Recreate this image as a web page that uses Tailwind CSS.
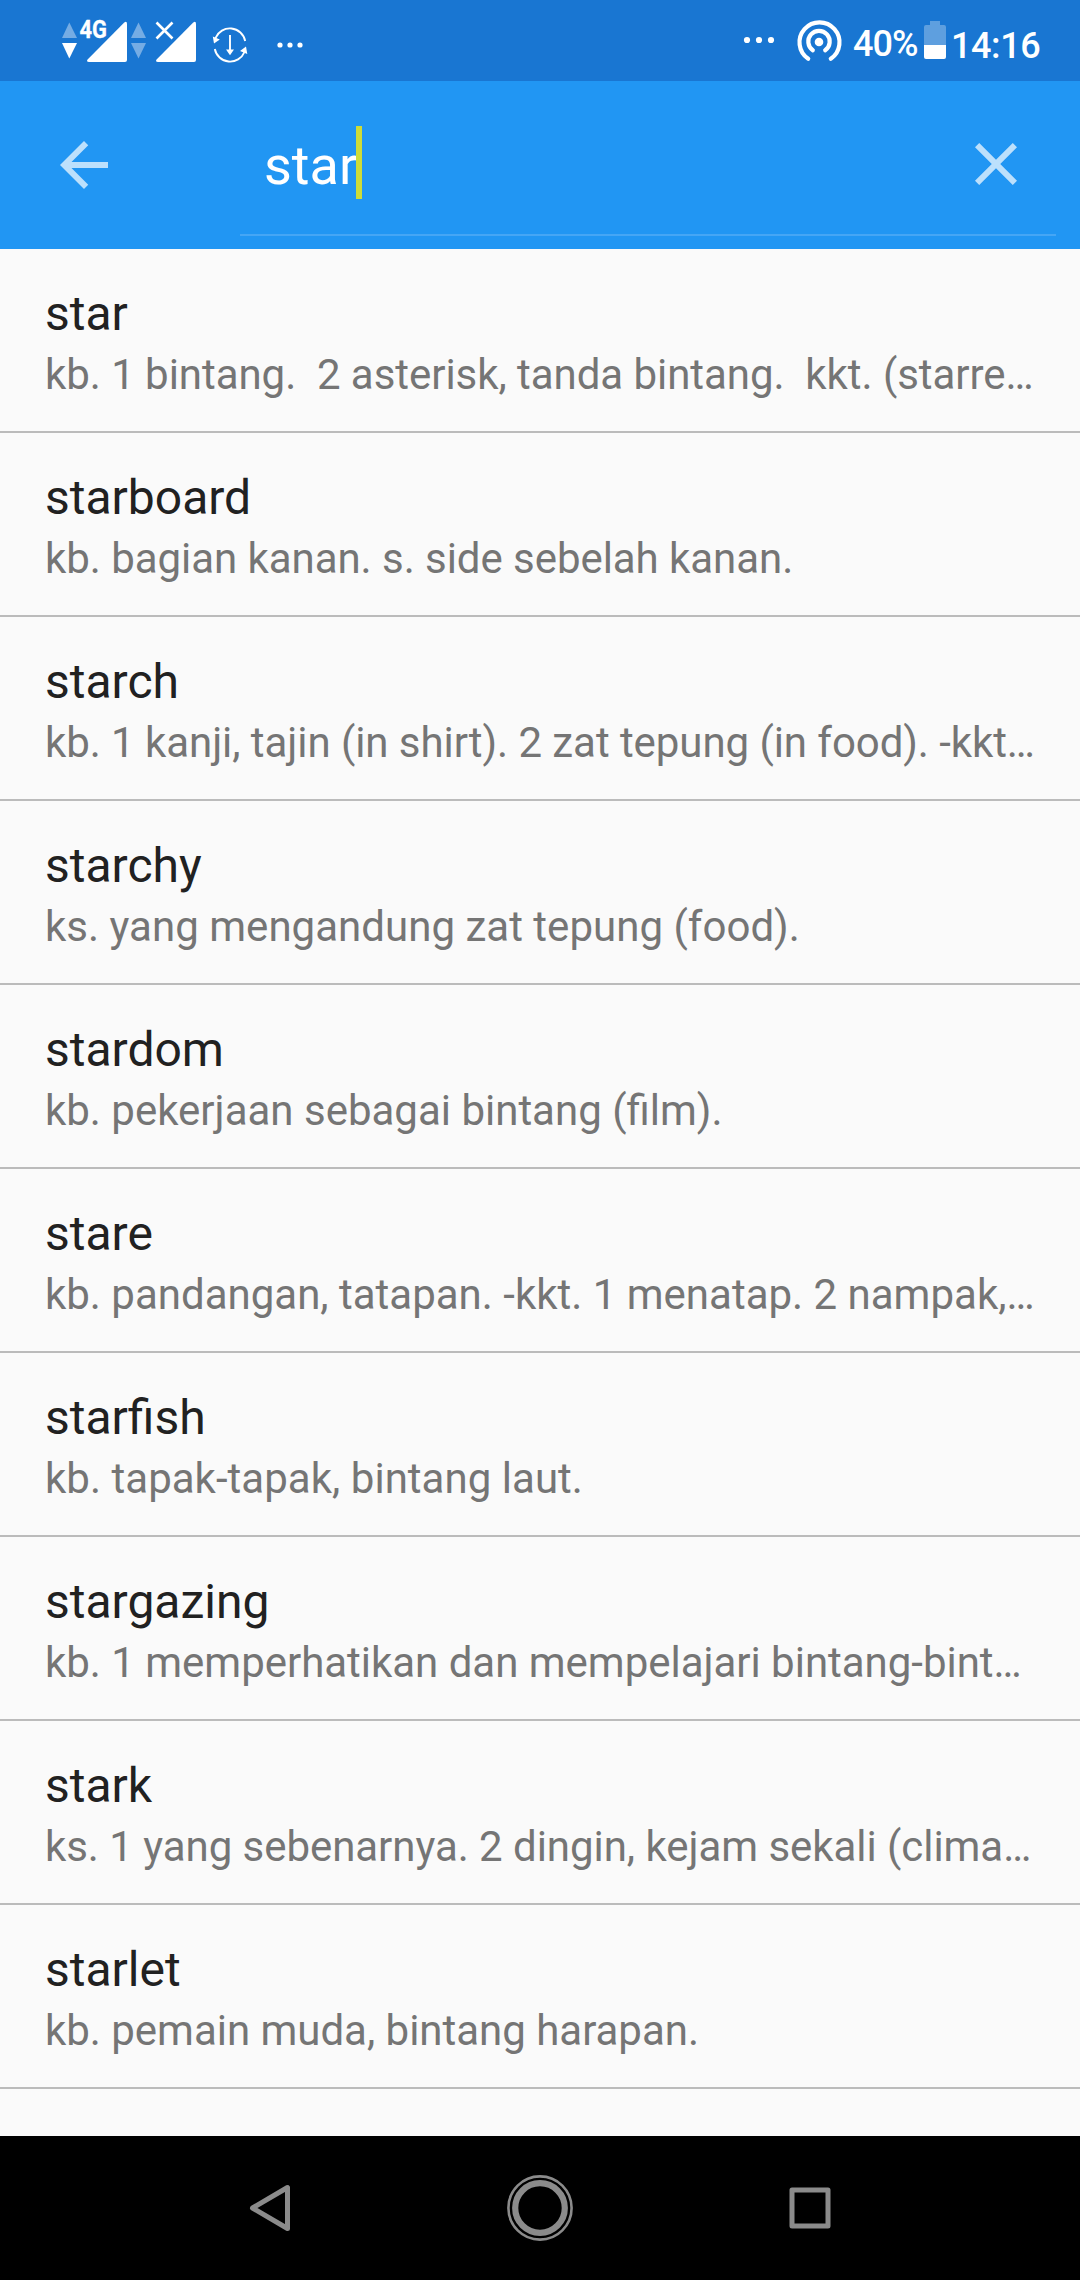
<!DOCTYPE html>
<html lang="id">
<head>
<meta charset="utf-8">
<title>Kamus</title>
<script src="https://cdn.jsdelivr.net/npm/@tailwindcss/browser@4"></script>
</head>
<body class="w-[1080px] h-[2280px] flex flex-col overflow-hidden bg-[#fafafa] font-['Roboto',sans-serif]">

<!-- Status bar -->
<header class="h-[81px] shrink-0 flex justify-between bg-[#1976d2] text-white">
  <svg class="w-[320px] h-[81px]" viewBox="0 0 320 81" fill="#fff">
    <g fill-opacity=".4"><path d="M69.3 22.5 77 38H62z"/><path d="M138.5 22.5 146 38h-15z"/><path d="M138.5 58.5 146 43h-15z"/></g>
    <path d="M69.3 58.5 77 43H62z"/>
    <text x="79.500" y="38.400" font-family="Roboto" font-weight="700" font-size="26.500" textLength="27.500" lengthAdjust="spacingAndGlyphs" stroke="#fff" stroke-width=".3">4G</text>
    <path d="M87.600 59.400 124 22.700Q127 20.500 127 24V60Q127 62 125 62H89Q86 61.500 87.600 59.400z"/>
    <path d="M156.600 59.400 193 22.700Q196 20.500 196 24V60Q196 62 194 62H158Q155 61.500 156.600 59.400z"/>
    <path d="M156.500 22.500 172.500 38.500M172.500 22.500 156.500 38.500" stroke="#fff" stroke-width="2.600"/>
    <path d="M215.500 38A15.600 15.600 0 0 1 245.200 41M214.800 49A15.600 15.600 0 0 0 244.500 52M230 35V51" stroke="#fff" stroke-width="1.900" fill="none"/>
    <path d="M212.800 36.500 219.800 39.600 214 43.500zM247.300 54 240 51 246 46.500zM226 49.500H234L230 55.300z"/>
    <circle cx="280" cy="45" r="2.600"/><circle cx="290" cy="45" r="2.600"/><circle cx="300" cy="45" r="2.600"/>
  </svg>
  <div class="flex">
    <svg class="w-[113px] h-[81px]" viewBox="740 0 113 81" fill="#fff">
      <circle cx="747" cy="40" r="3.100"/><circle cx="759" cy="40" r="3.100"/><circle cx="771" cy="40" r="3.100"/>
      <circle cx="819" cy="42" r="4.300"/>
      <g fill="none" stroke="#fff" stroke-width="4.200" stroke-linecap="round"><path d="M808.200 58.800A20 20 0 1 1 830.800 58.800"/><path d="M812.800 50.300A10.700 10.700 0 1 1 825.200 50.300"/></g>
    </svg>
    <span class="w-[69px] pt-[23px] text-[36px] leading-[42px] font-medium tracking-[-0.9px] whitespace-nowrap">40%</span>
    <svg class="w-[29px] h-[81px]" viewBox="922 0 29 81" fill="#fff">
      <path d="M930 21H940V25H944Q946 25 946 27V45H924V27Q924 25 926 25H930z" fill-opacity=".3"/><path d="M924 45H946V57Q946 59 944 59H926Q924 59 924 57z"/>
    </svg>
    <span class="w-[129px] pt-[25px] text-[36px] leading-[42px] font-medium tracking-[-0.4px] whitespace-nowrap">14:16</span>
  </div>
</header>

<!-- Search toolbar -->
<div class="h-[168px] shrink-0 flex bg-[#2196f3]">
  <div class="w-[240px] pt-[48px] pl-[48px]">
    <svg class="w-[72px] h-[72px]" viewBox="0 0 24 24" fill="#fff" fill-opacity=".7"><path d="M20 11H7.830l5.590-5.590L12 4l-8 8 8 8 1.410-1.410L7.830 13H20z"/></svg>
  </div>
  <div class="w-[816px] h-[155px] pl-[24px] pr-[24px] flex justify-between border-b-2 border-[#45a6f5]">
    <div class="flex pt-[45px]">
      <span class="w-[92px] h-[73px] text-[54px] leading-[73px] pt-[3px] text-white">star</span>
      <span class="w-[6px] h-[73px] bg-[#cddc39]"></span>
    </div>
    <svg class="w-[72px] h-[72px] mt-[47px]" viewBox="0 0 24 24" fill="#fff" fill-opacity=".7"><path d="M19 6.410 17.590 5 12 10.590 6.410 5 5 6.410 10.590 12 5 17.590 6.410 19 12 13.410 17.590 19 19 17.590 13.410 12z"/></svg>
  </div>
</div>

<!-- Results -->
<ul class="grow">
  <li class="h-[184px] px-[45px] pt-[37px] border-b-2 border-[#bbbbbb]"><h2 class="text-[48px] leading-[56px] text-[#212121]">star</h2><p class="mt-[8px] text-[42px] leading-[50px] tracking-[-0.045px] text-[#757575] whitespace-pre">kb. 1 bintang.  2 asterisk, tanda bintang.  kkt. (starre…</p></li>
  <li class="h-[184px] px-[45px] pt-[37px] border-b-2 border-[#bbbbbb]"><h2 class="text-[48px] leading-[56px] text-[#212121]">starboard</h2><p class="mt-[8px] text-[42px] leading-[50px] tracking-[-0.05px] text-[#757575] whitespace-pre">kb. bagian kanan. s. side sebelah kanan.</p></li>
  <li class="h-[184px] px-[45px] pt-[37px] border-b-2 border-[#bbbbbb]"><h2 class="text-[48px] leading-[56px] text-[#212121]">starch</h2><p class="mt-[8px] text-[42px] leading-[50px] tracking-[-0.065px] text-[#757575] whitespace-pre">kb. 1 kanji, tajin (in shirt). 2 zat tepung (in food). -kkt…</p></li>
  <li class="h-[184px] px-[45px] pt-[37px] border-b-2 border-[#bbbbbb]"><h2 class="text-[48px] leading-[56px] text-[#212121]">starchy</h2><p class="mt-[8px] text-[42px] leading-[50px] tracking-[0.02px] text-[#757575] whitespace-pre">ks. yang mengandung zat tepung (food).</p></li>
  <li class="h-[184px] px-[45px] pt-[37px] border-b-2 border-[#bbbbbb]"><h2 class="text-[48px] leading-[56px] text-[#212121]">stardom</h2><p class="mt-[8px] text-[42px] leading-[50px] text-[#757575] whitespace-pre">kb. pekerjaan sebagai bintang (film).</p></li>
  <li class="h-[184px] px-[45px] pt-[37px] border-b-2 border-[#bbbbbb]"><h2 class="text-[48px] leading-[56px] text-[#212121]">stare</h2><p class="mt-[8px] text-[42px] leading-[50px] text-[#757575] whitespace-pre">kb. pandangan, tatapan. -kkt. 1 menatap. 2 nampak,…</p></li>
  <li class="h-[184px] px-[45px] pt-[37px] border-b-2 border-[#bbbbbb]"><h2 class="text-[48px] leading-[56px] text-[#212121]">starfish</h2><p class="mt-[8px] text-[42px] leading-[50px] tracking-[0.03px] text-[#757575] whitespace-pre">kb. tapak-tapak, bintang laut.</p></li>
  <li class="h-[184px] px-[45px] pt-[37px] border-b-2 border-[#bbbbbb]"><h2 class="text-[48px] leading-[56px] text-[#212121]">stargazing</h2><p class="mt-[8px] text-[42px] leading-[50px] tracking-[-0.02px] text-[#757575] whitespace-pre">kb. 1 memperhatikan dan mempelajari bintang-bint…</p></li>
  <li class="h-[184px] px-[45px] pt-[37px] border-b-2 border-[#bbbbbb]"><h2 class="text-[48px] leading-[56px] text-[#212121]">stark</h2><p class="mt-[8px] text-[42px] leading-[50px] tracking-[-0.05px] text-[#757575] whitespace-pre">ks. 1 yang sebenarnya. 2 dingin, kejam sekali (clima…</p></li>
  <li class="h-[184px] px-[45px] pt-[37px] border-b-2 border-[#bbbbbb]"><h2 class="text-[48px] leading-[56px] text-[#212121]">starlet</h2><p class="mt-[8px] text-[42px] leading-[50px] tracking-[-0.02px] text-[#757575] whitespace-pre">kb. pemain muda, bintang harapan.</p></li>
</ul>

<!-- Navigation bar -->
<nav class="h-[144px] shrink-0 flex items-center justify-center gap-[198px] bg-black">
  <svg class="w-[72px] h-[72px]" viewBox="0 0 72 72" fill="none" stroke="#8b8b8b" stroke-width="5" stroke-linejoin="round"><path d="M18.500 36 53.500 15.500V56.500z"/></svg>
  <svg class="w-[72px] h-[72px]" viewBox="0 0 72 72" fill="none" stroke="#8b8b8b"><circle cx="36" cy="36" r="31.600" stroke-width="2.600"/><circle cx="36" cy="36" r="24.800" stroke-width="6.200"/></svg>
  <svg class="w-[72px] h-[72px]" viewBox="0 0 72 72" fill="none" stroke="#8b8b8b" stroke-width="5" stroke-linejoin="round"><path d="M18 18H54V54H18z"/></svg>
</nav>
</body>
</html>
